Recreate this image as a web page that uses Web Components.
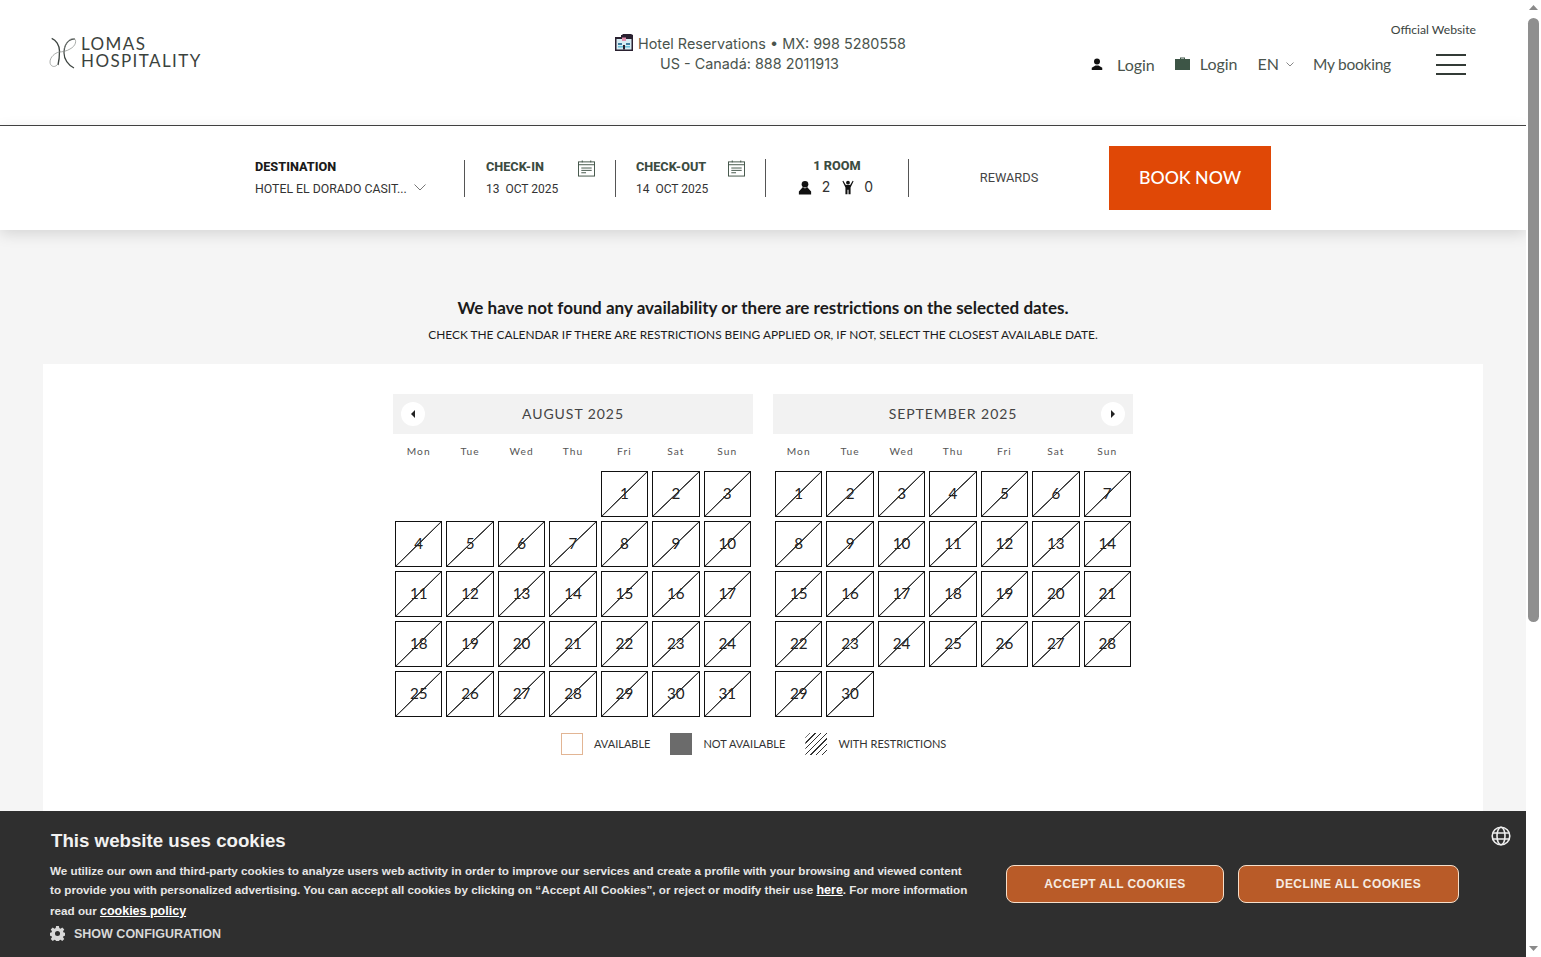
<!DOCTYPE html>
<html lang="en"><head><meta charset="utf-8"><title>Lomas Hospitality</title>
<style>
html,body{margin:0;padding:0;height:957px;overflow:hidden;background:#f5f5f5;font-family:"Lato",sans-serif;color:#222}
</style></head><body>
<lh-page>
  <lh-header></lh-header>
  <lh-booking></lh-booking>
  <lh-notice></lh-notice>
  <lh-panel>
    <lh-month slot="months" name="AUGUST 2025" start="4" days="31" nav="prev"></lh-month>
    <lh-month slot="months" name="SEPTEMBER 2025" start="0" days="30" nav="next"></lh-month>
    <lh-legend slot="legend"></lh-legend>
  </lh-panel>
  <lh-cookie></lh-cookie>
</lh-page>
<lh-scrollbar></lh-scrollbar>
<script>
function def(name, html, init){
  customElements.define(name, class extends HTMLElement{
    connectedCallback(){
      if(this.shadowRoot) return;
      const r=this.attachShadow({mode:'open'});
      r.innerHTML=typeof html==='function'?html(this):html;
      if(init) init(r,this);
    }
  });
}
def('lh-page',`<style>:host{display:block;width:1526px;height:957px;position:relative;overflow:hidden;background:#f5f5f5}</style><slot></slot>`);

const cal=`<svg width="17" height="17" viewBox="0 0 18 17" fill="none" stroke="#3f5245" stroke-width="1"><rect x=".5" y="1.500" width="17" height="15"/><path d="M.5 4.500h17M4.500 0v2M13.500 0v2M3.500 8h11M3.500 10.500h11M3.500 13h5"/></svg>`;

def('lh-logo',`<style>
:host{display:flex;align-items:center;gap:5px;color:#3b423d}
svg{width:26px;height:32px;flex:none;overflow:visible}
div{font:400 17px/16.500px "Lato",sans-serif;letter-spacing:1.400px;white-space:nowrap}
</style>
<svg viewBox="0 0 26 32" fill="none"><path d="M1.700 1.300C6 3 9.500 8 9.500 14c0 5-.5 10-1.500 14" stroke="#3d4440" stroke-width="1.300"/><path d="M25 2c-7 0-11 6-11 14 0 6 4 12 10 15" stroke="#3d4440" stroke-width="1.200"/><path d="M14 12C16 5 20 1 24 1.500c3 1.500 2 7.500-4 10.500-3 2-8 3-11 3-4 1-9 5-9 10 0 4 4 6 7 3" stroke="#858a87" stroke-width=".7"/></svg>
<div>LOMAS<br>HOSPITALITY</div>`);

def('lh-phone',`<style>
:host{display:block;font:400 14.400px/19.500px "Inter",sans-serif;color:#4a544d;white-space:nowrap}
svg{width:18px;height:17px;vertical-align:-2px;margin-right:1px}
.b{padding-left:45px}
</style>
<div><svg viewBox="0 0 18 17"><path fill="#2a2130" d="M0 3h6V1h1l1-1h8l2 1v16H0z"/><rect x="1.500" y="5" width="15" height="10.500" fill="#d7ecf3"/><path fill="#e38fae" d="M7 3.500h4V7H7z"/><path fill="#3f7da0" d="M3 9h4v2H3zM11 9h4v2h-4z"/><path fill="#6cc3dc" d="M3 12h12v1.500H3z"/><rect x="8" y="11" width="2" height="4.500" fill="#2a2130"/></svg> Hotel Reservations • MX: 998 5280558</div>
<div class="b">US - Canadá: 888 2011913</div>`);

def('lh-nav',`<style>
:host{display:block;width:385px;font:400 16px/20px "Lato",sans-serif;color:#4a544d}
.off{text-align:right;font-size:12.200px;line-height:16px;color:#3b443e;margin-top:22px}
.row{display:flex;align-items:center;margin-top:14px;white-space:nowrap}
svg{display:block;flex:none}
.ham{margin:2px 0 0 45px;width:30px;display:flex;flex-direction:column;gap:7.500px}
.ham i{display:block;height:2px;background:#333b36}
</style>
<div class="off">Official Website</div>
<div class="row">
<svg width="12" height="12" viewBox="0 0 16 16" fill="#111" style="margin-right:14px"><circle cx="8" cy="4.500" r="4"/><path d="M1 16v-3l5-3h4l5 3v3z"/></svg>
<span style="margin-right:20px;position:relative;top:1px">Login</span>
<svg width="15" height="13" viewBox="0 0 15 13" fill="#3d5546" style="margin-right:10px"><path d="M5 2V.5h5V2h5v11H0V2zM6 2h3V1.500H6z"/></svg>
<span style="margin-right:20px">Login</span>
<span>EN</span>
<svg width="8" height="5" viewBox="0 0 8 5" fill="none" stroke="#888" style="margin:2px 19px 0 7px"><path d="M.5.500 4 4 7.500.500"/></svg>
<span style="font-size:15.500px;letter-spacing:-.25px">My booking</span>
<span class="ham"><i></i><i></i><i></i></span>
</div>`);

def('lh-header',`<style>
:host{display:grid;grid-template-columns:565px 476px auto;height:125px;padding-left:50px;border-bottom:1px solid #444;background:#fff;box-sizing:content-box}
lh-logo{align-self:start;margin-top:36px}
lh-phone{align-self:start;margin-top:34px;width:291px}
</style><lh-logo></lh-logo><lh-phone></lh-phone><lh-nav></lh-nav>`);

def('lh-booking',`<style>
:host{display:flex;height:104px;background:#fff;box-shadow:0 4px 14px rgba(0,0,0,.13);padding-left:255px;position:relative;color:#222;font:400 12.300px/16px "Roboto",sans-serif;white-space:nowrap}
.sec{height:37px;margin-top:34px;box-sizing:border-box}
.div{border-left:1px solid #555}
b{display:block;font-weight:800;font-size:12.700px;line-height:14px;color:#3c4c41}
.val{display:block;margin-top:7px;color:#333}
.dest{width:209px}.dest b{color:#1a1a1a}
.date{width:151px;padding-left:21px;position:relative}
.date+.date{width:150px;padding-left:20px}
.date svg{position:absolute;top:0;right:20px}
.date .val{font-size:12px}
.room{width:143px;margin-top:33px;height:38px;text-align:center}
.pax{display:flex;justify-content:center;align-items:center;height:18px;margin-top:5px;padding-right:3px;font:400 14px/18px "Inter",sans-serif;color:#333}
.pax svg{display:block}
.rew{width:200px;display:flex;justify-content:center;align-items:center;height:38px;margin-top:33px;font-size:12.800px;color:#444}
.btn{align-self:center;width:162px;height:64px;background:#e04806;color:#fff;display:flex;align-items:center;justify-content:center;padding-bottom:2px;box-sizing:border-box;font:500 17.700px "Lato",sans-serif}
</style>
<div class="sec dest"><b>DESTINATION</b><span class="val">HOTEL EL DORADO CASIT... <svg width="12" height="7" viewBox="0 0 12 7" fill="none" stroke="#777" style="margin:0 0 2px 4px"><path d="M.5.500 6 6 11.500.500"/></svg></span></div>
<div class="sec date div"><b>CHECK-IN</b><span class="val">13 &nbsp;OCT 2025</span>${cal}</div>
<div class="sec date div"><b>CHECK-OUT</b><span class="val">14 &nbsp;OCT 2025</span>${cal}</div>
<div class="sec room div"><b>1 ROOM</b><div class="pax"><svg width="14" height="15" viewBox="0 0 16 16" fill="#111"><circle cx="8" cy="4.300" r="3.800"/><path d="M5.600 7.500 1 12.500V16h14v-3.500L10.400 7.500 8 9.200z"/></svg><span style="margin:0 12px 0 10px">2</span><svg width="12" height="15" viewBox="0 0 14 16" fill="#111"><circle cx="7" cy="2.400" r="2.200"/><path d="M1.500 0 4.500 5h5l3-5 1 .6L10 8v8H7.600v-5.500H6.400V16H4V8L.5.600z"/></svg><span style="margin-left:10px">0</span></div></div>
<div class="rew div">REWARDS</div>
<div class="btn">BOOK NOW</div>`);

def('lh-notice',`<style>
:host{display:block;text-align:center;padding-top:67px;height:134px;box-sizing:border-box;color:#1b1b1b}
h1{margin:0;font:700 17.050px/22px "Lato",sans-serif}
p{margin:8px 0 0;font:400 11.900px/16px "Lato",sans-serif}
</style><h1>We have not found any availability or there are restrictions on the selected dates.</h1>
<p>CHECK THE CALENDAR IF THERE ARE RESTRICTIONS BEING APPLIED OR, IF NOT, SELECT THE CLOSEST AVAILABLE DATE.</p>`);

def('lh-panel',`<style>
:host{display:block;margin:0 43px;width:1440px;height:560px;background:#fff;padding-top:30px;box-sizing:border-box}
.m{display:flex;justify-content:center;gap:20px}
</style><div class="m"><slot name="months"></slot></div><slot name="legend"></slot>`);

def('lh-day',`<style>
:host{display:flex;align-items:center;justify-content:center;height:46px;margin:0 2px 4px;padding-bottom:2px;box-sizing:border-box;border:1px solid #111;font:400 15.200px "Lato",sans-serif;color:#222;
background:linear-gradient(to bottom right,transparent calc(50% - .8px),#333 calc(50% - .3px),#333 calc(50% + .3px),transparent calc(50% + .8px))}
</style><slot></slot>`);

def('lh-month',t=>{
  const start=+t.getAttribute('start'),days=+t.getAttribute('days'),nav=t.getAttribute('nav');
  let cells='';
  for(let i=0;i<start;i++)cells+='<span></span>';
  for(let d=1;d<=days;d++)cells+=`<lh-day>${d}</lh-day>`;
  const arrow=nav==='prev'?'<path d="M6 1v8L2 5z"/>':'<path d="M2 1v8l4-4z"/>';
  const wd=['Mon','Tue','Wed','Thu','Fri','Sat','Sun'].map(x=>`<span>${x}</span>`).join('');
  return `<style>
:host{display:block;width:360px}
.head{height:40px;padding-bottom:2px;box-sizing:border-box;background:#f2f2f2;display:flex;align-items:center;justify-content:center;position:relative;font:400 14px "Lato",sans-serif;letter-spacing:.95px;color:#444}
.nav{position:absolute;top:8px;${nav==='prev'?'left:8px':'right:8px'};width:24px;height:24px;border-radius:50%;background:#fff;display:flex;align-items:center;justify-content:center}
.wd{display:grid;grid-template-columns:repeat(7,1fr);height:37px;padding-bottom:3px;box-sizing:border-box;align-items:center;text-align:center;font:400 10.200px "Lato",sans-serif;letter-spacing:1.100px;color:#555}
.g{display:grid;grid-template-columns:repeat(7,1fr)}
</style><div class="head"><span class="nav"><svg width="8" height="10" viewBox="0 0 8 10" fill="#222">${arrow}</svg></span>${t.getAttribute('name')}</div>
<div class="wd">${wd}</div><div class="g">${cells}</div>`;
});

def('lh-legend',`<style>
:host{display:flex;align-items:center;padding-left:518px;margin-top:2px;height:40px;font:400 11px "Lato",sans-serif;color:#333;white-space:nowrap}
i{display:block;width:22px;height:22px;box-sizing:border-box;flex:none;transform:translateY(1px)}
.a{border:1px solid #e2b594;margin-right:11px}
.n{background:#6b6b6b;margin:0 11px 0 20px}
.r{margin:0 11px 0 20px;background:repeating-linear-gradient(135deg,#fff 0 3px,#333 3px 4px);clip-path:polygon(20% 0,100% 0,100% 80%,80% 100%,0 100%,0 20%)}
</style><i class="a"></i><span>AVAILABLE</span><i class="n"></i><span>NOT AVAILABLE</span><i class="r"></i><span>WITH RESTRICTIONS</span>`);

def('lh-cookie',`<style>
:host{position:absolute;left:0;right:0;bottom:0;height:146px;background:#2f2f2f;color:#e6e6e6;font:700 11.680px/19.300px "Liberation Sans",sans-serif;box-sizing:border-box;display:block}
.wrap{display:grid;grid-template-columns:956px auto;padding:19px 0 0 50px}
h2{margin:0 0 0 1px;font:700 18.700px/22px "Liberation Sans",sans-serif;color:#f2f2f2}
p{margin:9px 0 0;white-space:nowrap}
a{color:#fff;text-decoration:underline;font-size:12.500px}
.cfg{display:flex;align-items:center;gap:9px;margin-top:4px;font-size:12.500px;color:#d8d8d8}
.cfg svg{margin-top:-2px}
.btns{display:flex;gap:14px;margin-top:35px}
button{height:38px;border:1px solid #f6dfca;border-radius:8px;background:#b95b28;color:#f6ebe2;font:700 12px "Liberation Sans",sans-serif;letter-spacing:.42px;padding:0}
.globe{position:absolute;left:1491px;top:15px}
</style>
<div class="wrap"><div><h2>This website uses cookies</h2>
<p>We utilize our own and third-party cookies to analyze users web activity in order to improve our services and create a profile with your browsing and viewed content<br>to provide you with personalized advertising. You can accept all cookies by clicking on “Accept All Cookies”, or reject or modify their use <a>here</a>. For more information<br>read our <a>cookies policy</a></p>
<div class="cfg"><svg width="15" height="15" viewBox="0 0 16 16" fill="#d8d8d8"><path fill-rule="evenodd" d="M6.500 0h3l.4 2.200 1.300.6 1.900-1.300 2.100 2.100-1.300 1.900.6 1.300 2 .4v3l-2 .4-.6 1.300 1.300 1.900-2.100 2.100-1.900-1.300-1.300.6-.4 2.200h-3l-.4-2.200-1.300-.6-1.900 1.300-2.100-2.100 1.300-1.900-.6-1.300-2-.4v-3l2-.4.6-1.300L.8 3.600l2.100-2.100 1.900 1.300 1.300-.6zM8 5.300a2.700 2.700 0 1 0 0 5.400 2.700 2.700 0 0 0 0-5.400z"/></svg><span>SHOW CONFIGURATION</span></div></div>
<div class="btns"><button style="width:218px">ACCEPT ALL COOKIES</button><button style="width:221px">DECLINE ALL COOKIES</button></div></div>
<svg class="globe" width="20" height="20" viewBox="0 0 20 20" fill="none" stroke="#eee" stroke-width="1.600"><circle cx="10" cy="10" r="8.800"/><ellipse cx="10" cy="10" rx="4" ry="8.800"/><path d="M1.800 7h16.400M1.800 13h16.400"/></svg>`);

def('lh-scrollbar',`<style>
:host{position:fixed;top:0;right:0;width:15px;height:957px;background:#fff;display:block}
.t{position:absolute;left:2px;top:18px;width:11px;height:604px;border-radius:6px;background:#8f8f8f}
svg{position:absolute;left:3px}
</style><svg style="top:5px" width="9" height="5" viewBox="0 0 9 5" fill="#8a8a8a"><path d="M4.500 0 9 5H0z"/></svg><div class="t"></div><svg style="top:946px" width="9" height="5" viewBox="0 0 9 5" fill="#8a8a8a"><path d="M0 0h9L4.500 5z"/></svg>`);
</script>
</body></html>
